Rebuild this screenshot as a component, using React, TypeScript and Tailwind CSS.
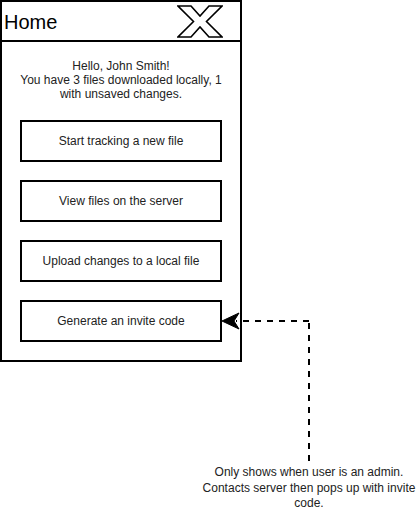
import React from "react";

const buttons = [
  "Start tracking a new file",
  "View files on the server",
  "Upload changes to a local file",
  "Generate an invite code",
];

export default function App() {
  return (
    <div
      className="relative w-[420px] h-[524px] bg-white text-black overflow-hidden"
      style={{ fontFamily: '"Liberation Sans", Arial, sans-serif' }}
    >
      <div className="w-[242px] h-[362px] border-2 border-black flex flex-col">
        <div className="h-[40px] shrink-0 border-b-2 border-black flex items-center justify-between pl-[2px] pr-[17px]">
          <span className="text-[20px] leading-none mt-[1px]">Home</span>
          <svg width="46" height="33" viewBox="0 0 46 33">
            <polygon
              points="1,1 14,1 23,11 32,1 45,1 29.5,16.5 45,32 32,32 23,22 14,32 1,32 16.5,16.5"
              fill="white"
              stroke="black"
              strokeWidth="1.6"
              strokeLinejoin="miter"
            />
          </svg>
        </div>
        <div className="flex flex-col pt-[17px] pl-[18px]">
          <p className="text-[12px] leading-[14px] text-center w-[238px] ml-[-18px] text-[#222]">
            Hello, John Smith!
            <br />
            You have 3 files downloaded locally, 1
            <br />
            with unsaved changes.
          </p>
          <div className="flex flex-col gap-[18px] mt-[19px]">
            {buttons.map((b) => (
              <div
                key={b}
                className="w-[202px] h-[42px] border-2 border-black flex items-center justify-center text-[12px] text-[#222]"
              >
                {b}
              </div>
            ))}
          </div>
        </div>
      </div>

      <svg
        className="absolute left-0 top-0 pointer-events-none"
        width="420"
        height="524"
        viewBox="0 0 420 524"
      >
        <line x1="309" y1="461" x2="309" y2="321" stroke="black" strokeWidth="2" strokeDasharray="6 6" />
        <line x1="309" y1="321" x2="236" y2="321" stroke="black" strokeWidth="2" strokeDasharray="6 6" />
        <polygon points="222,321 239,313 234,321 239,329" fill="black" stroke="black" strokeWidth="1" />
      </svg>

      <p className="absolute left-[194px] top-[465px] w-[230px] text-center text-[12px] leading-[15.5px] text-[#222]">
        Only shows when user is an admin.
        <br />
        Contacts server then pops up with invite
        <br />
        code.
      </p>
    </div>
  );
}
